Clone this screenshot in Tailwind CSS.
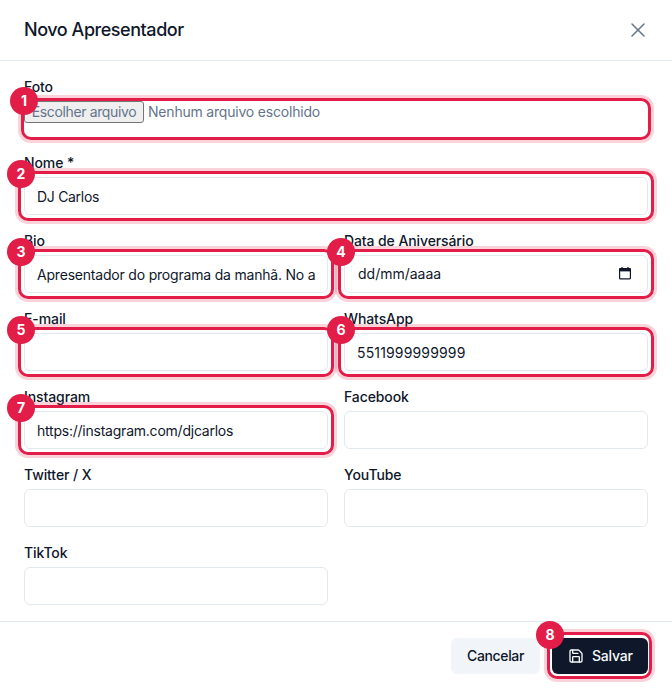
<!DOCTYPE html>
<html lang="pt-BR">
<head>
    <meta charset="UTF-8">
    <title>Novo Apresentador</title>
    <script src="https://cdn.jsdelivr.net/npm/@tailwindcss/browser@4"></script>
</head>
<body class="bg-white font-['Inter',sans-serif] text-[#0f172a] w-[672px] h-[690px] overflow-hidden antialiased">
    <!-- Header -->
    <header class="flex items-center justify-between h-[61px] border-b border-[#e2e8f0] pl-6 pr-[22px]">
        <h2 class="text-lg font-[450] tracking-[-0.45px] leading-7">Novo Apresentador</h2>
        <svg class="w-6 h-6 text-[#64748b]" viewBox="0 0 24 24" fill="none" stroke="currentColor" stroke-width="1.5" stroke-linecap="round" stroke-linejoin="round"><path d="M18 6 6 18"/><path d="m6 6 12 12"/></svg>
    </header>

    <!-- Form -->
    <form class="grid grid-cols-2 gap-x-4 gap-y-4 px-6 pt-4 pb-4 h-[560px] content-start">
        <div class="col-span-2">
            <label class="block text-sm font-[450] tracking-[-0.1px] leading-5 mb-1">Foto</label>
            <div class="relative h-9 flex items-start text-sm leading-5 text-[#64748b]">
                <span class="h-[22px] w-[120px] flex items-center justify-center bg-[#efefef] border border-[#767676] rounded-[3px] tracking-[-0.37px]">Escolher arquivo</span>
                <span class="ml-1 leading-[22px] tracking-[-0.2px]">Nenhum arquivo escolhido</span>
                <div class="absolute -left-[3px] -top-[3px] -right-[3px] -bottom-[3px] border-[3px] border-[#e11d48] rounded-[10px] shadow-[0_0_0_3px_rgba(225,29,72,0.2)] pointer-events-none">
                    <span class="absolute -left-[14px] -top-[14px] w-7 h-7 rounded-full bg-[#e11d48] text-white text-sm font-bold flex items-center justify-center z-10">1</span>
                </div>
            </div>
        </div>

        <div class="col-span-2">
            <label class="block text-sm font-[450] tracking-[-0.1px] leading-5 mb-1">Nome *</label>
            <div class="relative">
                <input type="text" value="DJ Carlos" class="w-full h-[38px] px-3 text-sm tracking-[-0.3px] bg-white border border-[#e2e8f0] rounded-md">
                <div class="absolute -inset-[6px] border-[3px] border-[#e11d48] rounded-[10px] shadow-[0_0_0_3px_rgba(225,29,72,0.2)] pointer-events-none">
                    <span class="absolute -left-[14px] -top-[14px] w-7 h-7 rounded-full bg-[#e11d48] text-white text-sm font-bold flex items-center justify-center z-10">2</span>
                </div>
            </div>
        </div>

        <div>
            <label class="block text-sm font-[450] tracking-[-0.1px] leading-5 mb-1">Bio</label>
            <div class="relative">
                <input type="text" value="Apresentador do programa da manhã. No ar desde 2010" class="w-full h-[38px] px-3 text-sm tracking-[-0.2px] bg-white border border-[#e2e8f0] rounded-md">
                <div class="absolute -inset-[6px] border-[3px] border-[#e11d48] rounded-[10px] shadow-[0_0_0_3px_rgba(225,29,72,0.2)] pointer-events-none">
                    <span class="absolute -left-[14px] -top-[14px] w-7 h-7 rounded-full bg-[#e11d48] text-white text-sm font-bold flex items-center justify-center z-10">3</span>
                </div>
            </div>
        </div>
        <div>
            <label class="block text-sm font-[450] tracking-[-0.1px] leading-5 mb-1">Data de Aniversário</label>
            <div class="relative">
                <div class="flex items-center justify-between w-full h-[38px] pl-[13px] pr-[15px] text-sm bg-white border border-[#e2e8f0] rounded-md">
                    <span>dd/mm/aaaa</span>
                    <svg class="w-[14px] h-[14px] -translate-y-px" viewBox="0 0 14 14" fill="none"><path d="M1.6 3.2a.6.6 0 0 1 .6-.6h9.6a.6.6 0 0 1 .6.6v9a.6.6 0 0 1-.6.6H2.200a.6.6 0 0 1-.6-.6Z" stroke="#0f172a" stroke-width="1.2"/><rect x="1" y="2.600" width="12" height="2.800" fill="#0f172a"/><path d="M4 1v1.600M10 1v1.600" stroke="#0f172a" stroke-width="1.200"/></svg>
                </div>
                <div class="absolute -inset-[6px] border-[3px] border-[#e11d48] rounded-[10px] shadow-[0_0_0_3px_rgba(225,29,72,0.2)] pointer-events-none">
                    <span class="absolute -left-[14px] -top-[14px] w-7 h-7 rounded-full bg-[#e11d48] text-white text-sm font-bold flex items-center justify-center z-10">4</span>
                </div>
            </div>
        </div>

        <div>
            <label class="block text-sm font-[450] tracking-[-0.1px] leading-5 mb-1">E-mail</label>
            <div class="relative">
                <input type="text" class="w-full h-[38px] px-3 text-sm bg-white border border-[#e2e8f0] rounded-md">
                <div class="absolute -inset-[6px] border-[3px] border-[#e11d48] rounded-[10px] shadow-[0_0_0_3px_rgba(225,29,72,0.2)] pointer-events-none">
                    <span class="absolute -left-[14px] -top-[14px] w-7 h-7 rounded-full bg-[#e11d48] text-white text-sm font-bold flex items-center justify-center z-10">5</span>
                </div>
            </div>
        </div>
        <div>
            <label class="block text-sm font-[450] tracking-[-0.1px] leading-5 mb-1">WhatsApp</label>
            <div class="relative">
                <input type="text" value="5511999999999" class="w-full h-[38px] px-3 text-sm tracking-[0.15px] bg-white border border-[#e2e8f0] rounded-md">
                <div class="absolute -inset-[6px] border-[3px] border-[#e11d48] rounded-[10px] shadow-[0_0_0_3px_rgba(225,29,72,0.2)] pointer-events-none">
                    <span class="absolute -left-[14px] -top-[14px] w-7 h-7 rounded-full bg-[#e11d48] text-white text-sm font-bold flex items-center justify-center z-10">6</span>
                </div>
            </div>
        </div>

        <div>
            <label class="block text-sm font-[450] tracking-[-0.1px] leading-5 mb-1">Instagram</label>
            <div class="relative">
                <input type="text" value="https://instagram.com/djcarlos" class="w-full h-[38px] px-3 text-sm tracking-[-0.23px] bg-white border border-[#e2e8f0] rounded-md">
                <div class="absolute -inset-[6px] border-[3px] border-[#e11d48] rounded-[10px] shadow-[0_0_0_3px_rgba(225,29,72,0.2)] pointer-events-none">
                    <span class="absolute -left-[14px] -top-[14px] w-7 h-7 rounded-full bg-[#e11d48] text-white text-sm font-bold flex items-center justify-center z-10">7</span>
                </div>
            </div>
        </div>
        <div>
            <label class="block text-sm font-[450] tracking-[-0.1px] leading-5 mb-1">Facebook</label>
            <input type="text" class="w-full h-[38px] px-3 text-sm bg-white border border-[#e2e8f0] rounded-md">
        </div>

        <div>
            <label class="block text-sm font-[450] tracking-[-0.1px] leading-5 mb-1">Twitter / X</label>
            <input type="text" class="w-full h-[38px] px-3 text-sm bg-white border border-[#e2e8f0] rounded-md">
        </div>
        <div>
            <label class="block text-sm font-[450] tracking-[-0.1px] leading-5 mb-1">YouTube</label>
            <input type="text" class="w-full h-[38px] px-3 text-sm bg-white border border-[#e2e8f0] rounded-md">
        </div>

        <div>
            <label class="block text-sm font-[450] tracking-[-0.1px] leading-5 mb-1">TikTok</label>
            <input type="text" class="w-full h-[38px] px-3 text-sm bg-white border border-[#e2e8f0] rounded-md">
        </div>
    </form>

    <!-- Footer -->
    <footer class="flex justify-end items-start gap-3 h-[69px] border-t border-[#e2e8f0] px-6 pt-4">
        <button type="button" class="h-9 w-[89px] rounded-md bg-[#f1f5f9] text-sm font-[450] tracking-[-0.35px]">Cancelar</button>
        <div class="relative">
            <button type="button" class="flex items-center gap-2 h-9 w-24 pl-4 rounded-md bg-[#0f172a] text-[#f8fafc] text-sm font-[450] tracking-[-0.2px]">
                <svg class="w-4 h-4" viewBox="0 0 24 24" fill="none" stroke="currentColor" stroke-width="2" stroke-linecap="round" stroke-linejoin="round"><path d="M15.2 3a2 2 0 0 1 1.4.6l3.8 3.8a2 2 0 0 1 .6 1.4V19a2 2 0 0 1-2 2H5a2 2 0 0 1-2-2V5a2 2 0 0 1 2-2z"/><path d="M17 21v-7a1 1 0 0 0-1-1H8a1 1 0 0 0-1 1v7"/><path d="M7 3v4a1 1 0 0 0 1 1h7"/></svg>
                Salvar
            </button>
            <div class="absolute -left-[5px] -top-[6px] -right-[4px] -bottom-[5px] border-[3px] border-[#e11d48] rounded-[10px] shadow-[0_0_0_3px_rgba(225,29,72,0.2)] pointer-events-none">
                <span class="absolute -left-[14px] -top-[14px] w-7 h-7 rounded-full bg-[#e11d48] text-white text-sm font-bold flex items-center justify-center z-10">8</span>
            </div>
        </div>
    </footer>
</body>
</html>
